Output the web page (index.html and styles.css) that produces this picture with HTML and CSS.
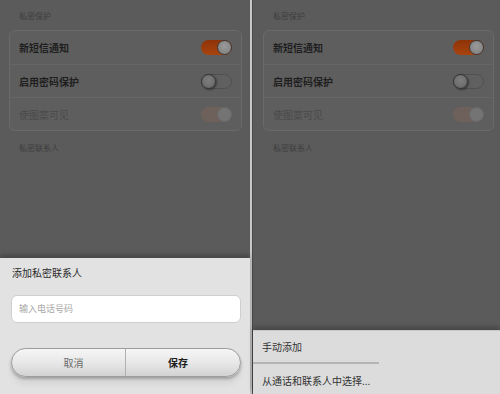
FILE: index.html
```html
<!DOCTYPE html>
<html lang="zh">
<head>
<meta charset="utf-8">
<link rel="stylesheet" href="styles.css">
</head>
<body>
<div class="screens">
  <section class="phone phone-left">
    <div class="dim">
      <div class="sec-title">私密保护</div>
      <div class="card">
        <div class="row"><span class="label">新短信通知</span><span class="toggle on"><span class="knob"></span></span></div>
        <div class="row"><span class="label">启用密码保护</span><span class="toggle off"><span class="knob"></span></span></div>
        <div class="row disabled"><span class="label">使图案可见</span><span class="toggle dis"><span class="knob"></span></span></div>
      </div>
      <div class="sec-title sec-2">私密联系人</div>
    </div>
    <div class="sheet sheet-dialog">
      <div class="dlg-title">添加私密联系人</div>
      <div class="input">输入电话号码</div>
      <div class="btns">
        <div class="btn cancel">取消</div>
        <div class="btn save">保存</div>
      </div>
    </div>
  </section>
  <div class="sep"></div>
  <section class="phone phone-right">
    <div class="dim">
      <div class="sec-title">私密保护</div>
      <div class="card">
        <div class="row"><span class="label">新短信通知</span><span class="toggle on"><span class="knob"></span></span></div>
        <div class="row"><span class="label">启用密码保护</span><span class="toggle off"><span class="knob"></span></span></div>
        <div class="row disabled"><span class="label">使图案可见</span><span class="toggle dis"><span class="knob"></span></span></div>
      </div>
      <div class="sec-title sec-2">私密联系人</div>
    </div>
    <div class="sheet sheet-menu">
      <div class="menu-item first">手动添加</div>
      <div class="menu-item">从通话和联系人中选择...</div>
    </div>
  </section>
</div>
</body>
</html>
```

FILE: styles.css
```css
* { box-sizing: border-box; }
html, body { margin: 0; padding: 0; }
body {
  width: 500px;
  height: 394px;
  overflow: hidden;
  font-family: "Noto Sans CJK SC", "Noto Sans", sans-serif;
  background: #5a5a5a;
}
.screens {
  display: flex;
  width: 500px;
  height: 394px;
}
.phone {
  display: flex;
  flex-direction: column;
  height: 394px;
}
.phone-left { width: 250px; }
.phone-right { width: 248px; border-left: 1px solid #4a4a4a; }
.sep {
  width: 2px;
  background: #c8c8c8;
}
.dim {
  flex: 1;
  background: #5b5b5b;
  padding: 10px 8px 0 9px;
  position: relative;
}
.phone-right .dim { padding: 10px 6px 0 10px; }
.sec-title {
  font-size: 8px;
  line-height: 12px;
  color: #3e3e3e;
  padding-left: 10px;
}
.sec-2 { margin-top: 11px; }
.card {
  margin-top: 8px;
  border: 1px solid #6a6a6a;
  border-radius: 6px;
  background: #5e5e5e;
}
.row {
  height: 33px;
  display: flex;
  align-items: center;
  justify-content: space-between;
  padding: 0 9px 0 9px;
}
.row + .row { border-top: 1px solid #666; }
.label {
  font-size: 10px;
  font-weight: 700;
  color: #1e1e1e;
}
.row.disabled .label { color: #4a4a4a; font-weight: 400; }
.toggle {
  position: relative;
  width: 31px;
  height: 15px;
  border-radius: 8px;
}
.toggle .knob {
  position: absolute;
  top: 0;
  width: 15px;
  height: 15px;
  border-radius: 50%;
  background: #8c8c8c;
}
.toggle.on {
  background: linear-gradient(#8e3308, #a8440f);
}
.toggle.on .knob {
  right: 0;
  border: 1px solid #3a3a3a;
  background: radial-gradient(circle at 50% 40%, #9a9a9a, #7c7c7c);
}
.toggle.off {
  background: #606060;
  border: 1px solid #505050;
}
.toggle.off .knob {
  left: -1px;
  top: -1px;
  border: 1px solid #333;
  background: radial-gradient(circle at 50% 40%, #7e7e7e, #646464);
  box-shadow: 1px 1px 2px rgba(0,0,0,.4);
}
.toggle.dis {
  background: #6e605b;
}
.toggle.dis .knob {
  right: 0;
  background: #747474;
  border: 1px solid #686868;
}
.sheet {
  position: relative;
  box-shadow: 0 -3px 5px rgba(0,0,0,.25);
}
.sheet-dialog {
  height: 136px;
  background: #e2e2e2;
  padding: 8px 9px 0 11px;
}
.dlg-title {
  font-size: 10px;
  line-height: 14px;
  color: #2a2a2a;
  padding-left: 1px;
}
.input {
  margin-top: 15px;
  height: 28px;
  border-radius: 6px;
  background: #fff;
  border: 1px solid #cfcfcf;
  font-size: 9px;
  line-height: 26px;
  color: #a8a8a8;
  padding-left: 7px;
}
.btns {
  margin-top: 25px;
  height: 29px;
  display: flex;
  border-radius: 15px;
  border: 1px solid #9c9c9c;
  background: linear-gradient(#f6f6f6, #e6e6e6 55%, #d2d2d2);
  box-shadow: 0 2px 3px rgba(0,0,0,.25), 0 7px 6px rgba(0,0,0,.06);
  overflow: hidden;
}
.btn {
  flex: 1;
  display: flex;
  align-items: center;
  justify-content: center;
  font-size: 10px;
}
.btn.cancel { color: #6a6a6a; border-right: 1px solid #b0b0b0; flex: 0 0 114px; padding-left: 10px; }
.btn.save { color: #1e1e1e; font-weight: 700; padding-right: 10px; }
.sheet-menu {
  height: 64px;
  background: #dcdcdc;
  border-top: 1px solid #c8c8c8;
}
.menu-item {
  height: 32px;
  display: flex;
  align-items: center;
  padding-left: 9px;
  font-size: 10px;
  color: #333;
}
.menu-item.first {
  width: 126px;
  border-bottom: 2px solid #b4b4b4;
  height: 33px;
}
```
